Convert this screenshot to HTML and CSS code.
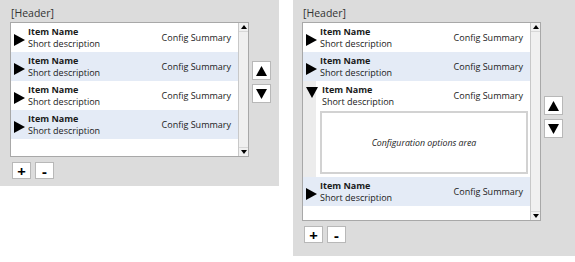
FILE: index.html
```html
<!DOCTYPE html>
<html lang="en">
<head>
    <meta charset="UTF-8">
    <title>Item List Mockups</title>
    <link rel="stylesheet" href="styles.css">
</head>
<body>
    <div class="panel panel-small">
        <div class="panel-header">[Header]</div>
        <div class="panel-main">
            <div class="list-box">
                <div class="list-rows">
                    <div class="row">
                        <svg class="toggle" width="11" height="12" viewBox="0 0 11 12"><polygon points="0,0 11,6 0,12"/></svg>
                        <div class="row-text">
                            <div class="item-name">Item Name</div>
                            <div class="item-desc">Short description</div>
                        </div>
                        <div class="row-summary">Config Summary</div>
                    </div>
                    <div class="row alt">
                        <svg class="toggle" width="11" height="12" viewBox="0 0 11 12"><polygon points="0,0 11,6 0,12"/></svg>
                        <div class="row-text">
                            <div class="item-name">Item Name</div>
                            <div class="item-desc">Short description</div>
                        </div>
                        <div class="row-summary">Config Summary</div>
                    </div>
                    <div class="row">
                        <svg class="toggle" width="11" height="12" viewBox="0 0 11 12"><polygon points="0,0 11,6 0,12"/></svg>
                        <div class="row-text">
                            <div class="item-name">Item Name</div>
                            <div class="item-desc">Short description</div>
                        </div>
                        <div class="row-summary">Config Summary</div>
                    </div>
                    <div class="row alt">
                        <svg class="toggle" width="11" height="12" viewBox="0 0 11 12"><polygon points="0,0 11,6 0,12"/></svg>
                        <div class="row-text">
                            <div class="item-name">Item Name</div>
                            <div class="item-desc">Short description</div>
                        </div>
                        <div class="row-summary">Config Summary</div>
                    </div>
                </div>
                <div class="scrollbar">
                    <span class="scroll-arrow"><svg width="6" height="4" viewBox="0 0 6 4"><polygon points="3,0 6,4 0,4"/></svg></span>
                    <span class="scroll-arrow"><svg width="6" height="4" viewBox="0 0 6 4"><polygon points="0,0 6,0 3,4"/></svg></span>
                </div>
            </div>
            <div class="move-buttons">
                <button class="btn"><svg width="11" height="10" viewBox="0 0 11 10"><polygon points="5.5,0 11,10 0,10"/></svg></button>
                <button class="btn"><svg width="11" height="10" viewBox="0 0 11 10"><polygon points="0,0 11,0 5.5,10"/></svg></button>
            </div>
        </div>
        <div class="panel-footer">
            <button class="btn btn-small">+</button>
            <button class="btn btn-small">-</button>
        </div>
    </div>

    <div class="panel panel-large">
        <div class="panel-header">[Header]</div>
        <div class="panel-main">
            <div class="list-box list-tall">
                <div class="list-rows">
                    <div class="row">
                        <svg class="toggle" width="11" height="12" viewBox="0 0 11 12"><polygon points="0,0 11,6 0,12"/></svg>
                        <div class="row-text">
                            <div class="item-name">Item Name</div>
                            <div class="item-desc">Short description</div>
                        </div>
                        <div class="row-summary">Config Summary</div>
                    </div>
                    <div class="row alt">
                        <svg class="toggle" width="11" height="12" viewBox="0 0 11 12"><polygon points="0,0 11,6 0,12"/></svg>
                        <div class="row-text">
                            <div class="item-name">Item Name</div>
                            <div class="item-desc">Short description</div>
                        </div>
                        <div class="row-summary">Config Summary</div>
                    </div>
                    <div class="row-expanded">
                        <div class="row-strip"></div>
                        <div class="row-body">
                            <div class="row open">
                                <svg class="toggle toggle-down" width="12" height="11" viewBox="0 0 12 11"><polygon points="0,0 12,0 6,11"/></svg>
                                <div class="row-text">
                                    <div class="item-name">Item Name</div>
                                    <div class="item-desc">Short description</div>
                                </div>
                                <div class="row-summary">Config Summary</div>
                            </div>
                            <div class="config-area">Configuration options area</div>
                        </div>
                    </div>
                    <div class="row alt">
                        <svg class="toggle" width="11" height="12" viewBox="0 0 11 12"><polygon points="0,0 11,6 0,12"/></svg>
                        <div class="row-text">
                            <div class="item-name">Item Name</div>
                            <div class="item-desc">Short description</div>
                        </div>
                        <div class="row-summary">Config Summary</div>
                    </div>
                </div>
                <div class="scrollbar">
                    <span class="scroll-arrow"><svg width="6" height="4" viewBox="0 0 6 4"><polygon points="3,0 6,4 0,4"/></svg></span>
                    <span class="scroll-arrow"><svg width="6" height="4" viewBox="0 0 6 4"><polygon points="0,0 6,0 3,4"/></svg></span>
                </div>
            </div>
            <div class="move-buttons move-low">
                <button class="btn"><svg width="11" height="10" viewBox="0 0 11 10"><polygon points="5.5,0 11,10 0,10"/></svg></button>
                <button class="btn"><svg width="11" height="10" viewBox="0 0 11 10"><polygon points="0,0 11,0 5.5,10"/></svg></button>
            </div>
        </div>
        <div class="panel-footer">
            <button class="btn btn-small">+</button>
            <button class="btn btn-small">-</button>
        </div>
    </div>
</body>
</html>
```

FILE: styles.css
```css
* {
    margin: 0;
    padding: 0;
    box-sizing: border-box;
    font-family: "Open Sans", "DejaVu Sans", sans-serif;
}

body {
    display: flex;
    align-items: flex-start;
    gap: 14px;
    background: #ffffff;
    color: #1a1a1a;
}

.panel {
    background: #dcdcdc;
    padding: 4px 0 0 10px;
}

.panel-small {
    width: 279px;
    height: 186px;
}

.panel-large {
    width: 282px;
    height: 256px;
    padding-left: 9px;
}

.panel-header {
    font-size: 10.5px;
    line-height: 18px;
    color: #333;
    padding-left: 1px;
}

.panel-main {
    display: flex;
    align-items: flex-start;
}

.list-box {
    display: flex;
    width: 239px;
    height: 135px;
    background: #ffffff;
    border: 1px solid #a8a8a8;
}

.list-tall {
    height: 199px;
}

.list-rows {
    flex: 1;
    display: flex;
    flex-direction: column;
}

.row {
    display: flex;
    align-items: center;
    height: 29px;
    padding: 0 7px 0 3px;
}

.row.alt {
    background: #e4ebf6;
}

.toggle {
    flex: none;
    margin: 4px 3px 0 0;
    fill: #000;
}

.toggle-down {
    margin: -6px 4px 0 0;
}

.row-text {
    flex: 1;
    font-size: 9px;
    line-height: 12px;
}

.item-name {
    font-weight: 700;
}

.row-summary {
    font-size: 9px;
}

.row-expanded {
    display: flex;
    height: 96px;
}

.row-strip {
    width: 13px;
    background: #ececec;
}

.row-body {
    flex: 1;
    display: flex;
    flex-direction: column;
}

.row.open {
    margin-left: -13px;
    height: 29px;
}

.config-area {
    display: flex;
    align-items: center;
    justify-content: center;
    height: 63px;
    margin: 1px 0 0 4px;
    width: 208px;
    border: 2px solid #d2d2d2;
    font-size: 8.8px;
    font-style: italic;
}

.scrollbar {
    width: 10px;
    display: flex;
    flex-direction: column;
    justify-content: space-between;
    background: #f0f0f0;
    border-left: 1px solid #c8c8c8;
}

.scroll-arrow {
    display: flex;
    align-items: center;
    justify-content: center;
    height: 9px;
    background: #f0f0f0;
    border-bottom: 1px solid #d8d8d8;
}

.scroll-arrow:last-child {
    border-bottom: none;
    border-top: 1px solid #d8d8d8;
}

.move-buttons {
    display: flex;
    flex-direction: column;
    gap: 4px;
    margin: 39px 0 0 3px;
}

.move-low {
    margin-top: 74px;
}

.btn {
    display: flex;
    align-items: center;
    justify-content: center;
    width: 19px;
    height: 19px;
    background: #ffffff;
    border: 1px solid #b8b8b8;
    color: #000;
}

.panel-footer {
    display: flex;
    gap: 4px;
    margin: 5px 0 0 2px;
}

.btn-small {
    height: 17px;
    font-size: 15px;
    font-weight: 700;
    line-height: 14px;
}
```
